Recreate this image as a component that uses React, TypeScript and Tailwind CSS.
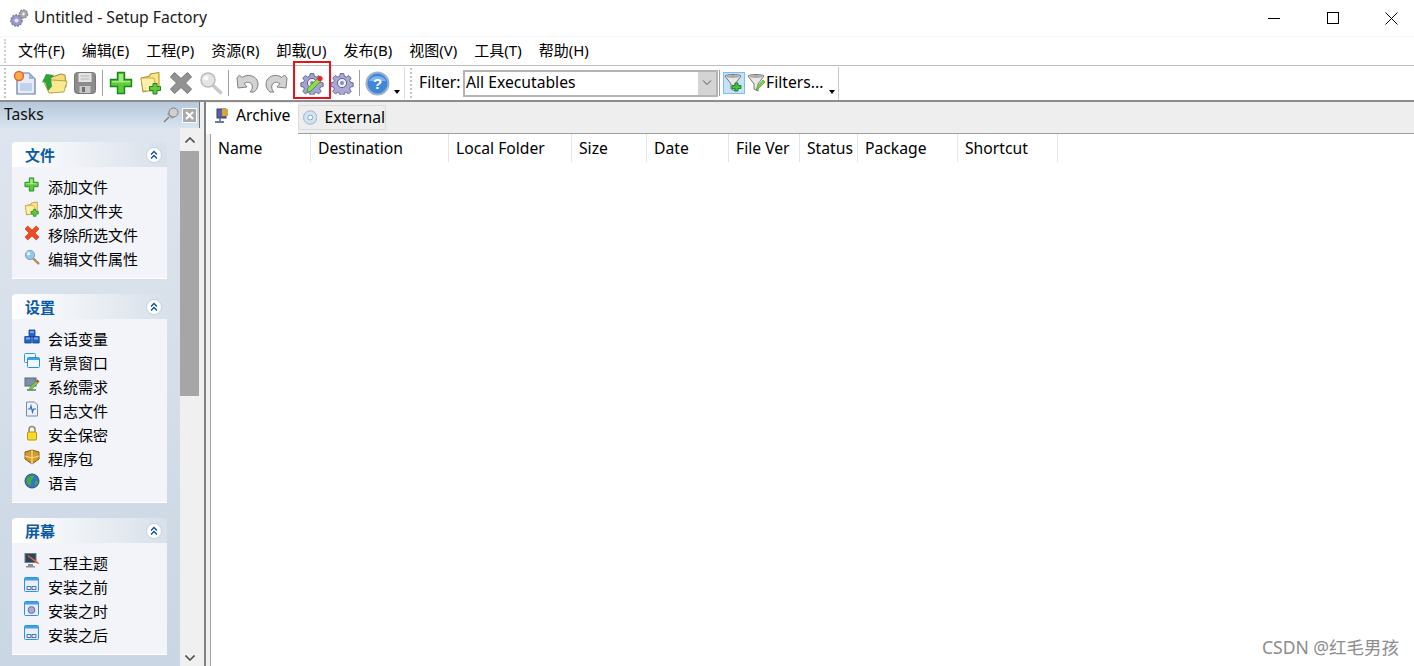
import React from "react";

type IconProps = { size?: number; muted?: boolean };

const font = "font-['Noto_Sans','Noto_Sans_CJK_SC',sans-serif]";

const menus = ["文件(F)", "编辑(E)", "工程(P)", "资源(R)", "卸载(U)", "发布(B)", "视图(V)", "工具(T)", "帮助(H)"];

const columns = [
  { name: "Name", w: "w-[100px]" },
  { name: "Destination", w: "w-[138px]" },
  { name: "Local Folder", w: "w-[123px]" },
  { name: "Size", w: "w-[75px]" },
  { name: "Date", w: "w-[82px]" },
  { name: "File Ver", w: "w-[71px]" },
  { name: "Status", w: "w-[58px]" },
  { name: "Package", w: "w-[100px]" },
  { name: "Shortcut", w: "w-[100px]" },
];

/* toolbar + task pane icons */
const Gear = ({ size = 24, muted }: IconProps) => (
  <svg width={size} height={size} viewBox="0 0 24 24">
    <path
      d="M10 1.500h4l.6 3 2.200.9 2.600-1.700 2.800 2.800-1.700 2.600.9 2.200 3 .6v4l-3 .6-.9 2.200 1.700 2.600-2.800 2.800-2.600-1.700-2.200.9-.6 3h-4l-.6-3-2.200-.9-2.600 1.700-2.800-2.800 1.700-2.600-.9-2.200-3-.6v-4l3-.6.9-2.200-1.700-2.600 2.800-2.800 2.600 1.700 2.200-.9z"
      transform="translate(1.200 1.200) scale(.9)"
      fill={muted ? "#a9a9d4" : "#a3a3d0"}
      stroke="#5f5f96"
      strokeWidth="1"
    />
    <circle cx="12" cy="12" r="4.600" fill="#eeeef8" stroke="#5f5f96" />
    <circle cx="12" cy="12" r="2" fill="#8b8bbd" />
  </svg>
);

const GearPencil = () => (
  <span className="relative block h-[24px] w-[24px]">
    <Gear />
    <svg className="absolute left-0 top-0" width="24" height="24" viewBox="0 0 24 24">
      <path d="M7 21.500l.8-4.500L17.500 7.500l3 3L11 20z" fill="#8cdc50" stroke="#3c8f22" strokeWidth=".8" />
      <circle cx="20" cy="7.500" r="2.600" fill="#e8262c" />
    </svg>
  </span>
);

const Plus = ({ size = 24 }: IconProps) => (
  <svg width={size} height={size} viewBox="0 0 24 24">
    <path d="M8.500 1.500h7v7h7v7h-7v7h-7v-7h-7v-7h7z" fill="#5fca3c" stroke="#17891a" strokeWidth="1.400" />
    <path d="M10 3h4v7H10zM3 10h18v1.500H3z" fill="#a6ea83" />
  </svg>
);

const Cross = ({ size = 24, muted }: IconProps) => (
  <svg width={size} height={size} viewBox="0 0 24 24">
    <path
      d="M5.500 1.500L12 7.500l6.500-6 4 4.500-6 6 6 6-4 4.500-6.500-6-6.500 6-4-4.500 6-6-6-6z"
      fill={muted ? "#929292" : "#ee4a24"}
      stroke={muted ? "#767676" : "#d0381a"}
    />
  </svg>
);

const Magnifier = ({ size = 24, muted }: IconProps) => (
  <svg width={size} height={size} viewBox="0 0 24 24">
    <path d="M13.500 14l8 7.500" stroke={muted ? "#c8c8c8" : "#b08d5a"} strokeWidth="3.600" strokeLinecap="round" />
    <circle cx="9" cy="9" r="7" fill={muted ? "#e4e4e4" : "#8fc8f0"} stroke={muted ? "#b9b9b9" : "#8d99a8"} strokeWidth="1.400" />
    <circle cx="7" cy="7" r="2.500" fill="#ffffff" opacity=".8" />
  </svg>
);

const FolderPlus = ({ size = 24 }: IconProps) => (
  <svg width={size} height={size} viewBox="0 0 24 24">
    <path d="M2 7l9-2V3l9-1.500V17L4 21z" fill="#ffe680" stroke="#a88f2b" strokeWidth="1" />
    <path d="M2 7h13l3 13H4z" fill="#fdf0a6" stroke="#b09a3c" strokeWidth=".8" />
    <path d="M14 12.500h4v3h3.500v4H18V23h-4v-3.500h-3.500v-4H14z" fill="#5fca3c" stroke="#17791a" strokeWidth=".9" />
  </svg>
);

const NewDoc = () => (
  <svg width="24" height="26" viewBox="0 0 24 26">
    <path d="M4 3h12l6 6v15H4z" fill="#e6edf9" stroke="#5f79a8" strokeWidth="1.200" />
    <path d="M16 3v6h6z" fill="#9fb6da" />
    <path d="M7 13h12v8H7z" fill="#c2d1ec" />
    <circle cx="6" cy="6" r="4.500" fill="#f6b33c" stroke="#ed5a45" strokeWidth="1.400" />
  </svg>
);

const OpenFolder = () => (
  <svg width="26" height="24" viewBox="0 0 26 24">
    <path d="M4 8l15-5 4 1 1 12-15 6z" fill="#f6dc78" stroke="#9d8a39" strokeWidth="1" />
    <path d="M1 9l6 13 15-1 3-11-15-1z" fill="#fbe98f" stroke="#a6903a" strokeWidth=".8" />
    <path d="M6 20L3 11l-3 .5L4 3l8 1-3 3.500 1 8z" fill="#2fa23c" />
  </svg>
);

const Save = () => (
  <svg width="24" height="24" viewBox="0 0 24 24">
    <rect x="1.500" y="1.500" width="21" height="21" rx="3" fill="#8c8c8c" stroke="#767676" />
    <rect x="5.500" y="2" width="13" height="9" fill="#e4e4e4" />
    <path d="M7.500 5h9M7.500 8h9" stroke="#b4b4b4" />
    <rect x="6.500" y="15" width="11" height="7" fill="#c9c9c9" />
    <rect x="9" y="16" width="3" height="5" fill="#6f6f6f" />
  </svg>
);

const Undo = ({ flip }: { flip?: boolean }) => (
  <svg width="24" height="22" viewBox="0 0 24 22" className={flip ? "-scale-x-100" : ""}>
    <path
      d="M2 6l1 10 9-1-3-3.500c3-2 7-1.500 8 1.500 1 2.500 0 5-2 7h4c4-3 5-8 3-12-3-5-10-6-15-2.500L4.500 3z"
      fill="#d2d2d2"
      stroke="#808080"
    />
  </svg>
);

const Help = () => (
  <svg width="25" height="25" viewBox="0 0 25 25">
    <circle cx="12.500" cy="12.500" r="11" fill="#3f87dc" stroke="#9db1cb" strokeWidth="2" />
    <path d="M4 10a9 7 0 0 1 17 0z" fill="#7fb4ee" />
    <text x="12.500" y="18" textAnchor="middle" fontSize="15" fontWeight="700" fill="#ffffff" fontFamily="Liberation Sans">?</text>
  </svg>
);

const Funnel = ({ add }: { add?: boolean }) => (
  <svg width="20" height="20" viewBox="0 0 20 20">
    <path d="M1 3c2-2 14-2 16 0l-6 8v7l-4-2v-5z" fill="#e8e8e8" stroke="#757575" />
    <ellipse cx="9" cy="3.500" rx="6.500" ry="1.500" fill="#a9a9a9" />
    {add ? (
      <path d="M11 10h3v2.500h3v3h-3V18h-3v-2.500H8v-3h3z" fill="#46c13a" stroke="#12701a" strokeWidth=".8" />
    ) : (
      <path d="M9 17l1-3 6-7 2 2-6 6z" fill="#7ed348" stroke="#3c8f22" strokeWidth=".6" />
    )}
  </svg>
);

const Blocks = () => (
  <svg width="16" height="16" viewBox="0 0 16 16">
    <path d="M5 1h6v6.500H5zM.8 7.500h6.500V14H.8zM8.700 7.500h6.500V14H8.700z" fill="#2464c8" stroke="#123f8d" strokeWidth=".8" />
    <path d="M6 2h4v2H6zM2 8.500h4v2H2zM10 8.500h4v2h-4z" fill="#78a8ee" />
  </svg>
);

const Windows = () => (
  <svg width="16" height="16" viewBox="0 0 16 16">
    <rect x=".5" y=".5" width="11" height="9" rx="1" fill="#eef6fe" stroke="#2f97ea" />
    <rect x="3.500" y="4.500" width="12" height="10" rx="1" fill="#f4f8fd" stroke="#2b8ee2" />
    <path d="M4 5h11v2H4z" fill="#3ba2ef" />
  </svg>
);

const SysReq = () => (
  <svg width="16" height="16" viewBox="0 0 16 16">
    <rect x="1" y="1" width="11" height="8" fill="#7c8fa6" stroke="#5c6670" />
    <path d="M3 12h9v2H3z" fill="#8f8f8f" />
    <path d="M5 13l1-3 6-6 2 2-6 6z" fill="#74c94a" stroke="#3c8f22" strokeWidth=".5" />
    <path d="M12 4l2 2 1.500-1.500-2-2z" fill="#dc3030" />
  </svg>
);

const LogDoc = () => (
  <svg width="16" height="16" viewBox="0 0 16 16">
    <path d="M2.500 1h8l3 3v11h-11z" fill="#eef2fa" stroke="#7b8aa8" />
    <path d="M4 8h2l1-3 1.500 6 1-3H12" fill="none" stroke="#2e6fcc" strokeWidth="1.200" />
  </svg>
);

const Lock = () => (
  <svg width="16" height="16" viewBox="0 0 16 16">
    <path d="M5 7V4.500a3 3 0 0 1 6 0V7" fill="none" stroke="#8f8a70" strokeWidth="1.600" />
    <rect x="3.500" y="7" width="9" height="8" rx="1" fill="#f8d928" stroke="#b59713" />
  </svg>
);

const Box = () => (
  <svg width="16" height="16" viewBox="0 0 16 16">
    <path d="M1 3l7-2 7 2v7l-7 5-7-5z" fill="#d49a2e" stroke="#875c12" />
    <path d="M8 1v14M1 7l7 2 7-2" stroke="#fbe18d" strokeWidth="1.200" fill="none" />
  </svg>
);

const Globe = () => (
  <svg width="16" height="16" viewBox="0 0 16 16">
    <circle cx="8" cy="8" r="7" fill="#2f78c8" stroke="#234f86" />
    <path d="M3 5c3-3 6-3 7-2 0 2-2 3-3 5 1 2 0 4-2 5-2-2-3-5-2-8zM11 8h3v3l-3 2z" fill="#49a83c" />
  </svg>
);

const Theme = () => (
  <svg width="16" height="16" viewBox="0 0 16 16">
    <rect x="1" y=".5" width="11" height="9" fill="#29435f" stroke="#6f7d88" />
    <path d="M4 11h5v2h2v1.500H2V13h2z" fill="#8b8f92" />
    <path d="M4 2l10 7 1.500 2-2.500-.5L3.500 3z" fill="#e9662f" />
  </svg>
);

const Screen = ({ gear }: { gear?: boolean }) => (
  <svg width="15" height="15" viewBox="0 0 15 15">
    <rect x=".5" y=".5" width="14" height="14" rx="1" fill="#e9eef8" stroke="#2d93e6" />
    <path d="M1 1h13v2.500H1z" fill="#3ba2ef" />
    {gear ? (
      <circle cx="7.500" cy="9" r="3.400" fill="#a9a9d6" stroke="#6e6ea6" />
    ) : (
      <path d="M3 9.500h4v3H3zM8 9.500h4v3H8z" fill="none" stroke="#3a66aa" strokeWidth=".9" />
    )}
  </svg>
);

const ToolBtn = ({ children }: { children: React.ReactNode }) => (
  <div className="flex h-[30px] w-[30px] items-center justify-center">{children}</div>
);

const Sep = () => <div className="mx-[2px] h-[26px] w-px bg-[#a0a0a0]" />;

const Grip = () => <div className="h-[30px] w-0 border-l-2 border-dotted border-[#c4c4c4]" />;

const Caret = () => <div className="mt-[18px] h-0 w-0 border-x-[3.500px] border-t-[4px] border-x-transparent border-t-black" />;

const Chevrons = () => (
  <div className="flex h-[16px] w-[16px] items-center justify-center rounded-full border border-[#c5d2e2] bg-white">
    <svg width="10" height="10" viewBox="0 0 10 10" fill="none" stroke="#0b4f96" strokeWidth="1.400">
      <path d="M2 4.500L5 1.500l3 3M2 8.500l3-3 3 3" />
    </svg>
  </div>
);

const TaskGroup = ({ title, items }: { title: string; items: { icon: React.ReactNode; label: string }[] }) => (
  <div className="w-[155px] shrink-0">
    <div className="flex h-[25px] items-center justify-between rounded-t-[4px] bg-gradient-to-r from-white to-[#d8e0ea] pl-[13px] pr-[5px]">
      <span className="mt-[2px] text-[15px] font-bold text-[#0a5aa6]">{title}</span>
      <Chevrons />
    </div>
    <div className="border-b border-white bg-[#f2f4f9] pb-[7px] pl-[12px] pt-[8px]">
      {items.map((item) => (
        <div key={item.label} className="flex h-[24px] items-center">
          <div className="-mt-[5px] flex w-[24px] justify-start">{item.icon}</div>
          <span className="text-[15px] text-black">{item.label}</span>
        </div>
      ))}
    </div>
  </div>
);

const fileItems = [
  { icon: <Plus size={15} />, label: "添加文件" },
  { icon: <FolderPlus size={16} />, label: "添加文件夹" },
  { icon: <Cross size={16} />, label: "移除所选文件" },
  { icon: <Magnifier size={16} />, label: "编辑文件属性" },
];

const settingItems = [
  { icon: <Blocks />, label: "会话变量" },
  { icon: <Windows />, label: "背景窗口" },
  { icon: <SysReq />, label: "系统需求" },
  { icon: <LogDoc />, label: "日志文件" },
  { icon: <Lock />, label: "安全保密" },
  { icon: <Box />, label: "程序包" },
  { icon: <Globe />, label: "语言" },
];

const screenItems = [
  { icon: <Theme />, label: "工程主题" },
  { icon: <Screen />, label: "安装之前" },
  { icon: <Screen gear />, label: "安装之时" },
  { icon: <Screen />, label: "安装之后" },
];

export default function App() {
  return (
    <div className={`relative flex h-[666px] w-[1414px] flex-col overflow-hidden bg-white text-[15.7px] text-black ${font}`}>
      {/* title bar */}
      <div className="flex h-[37px] shrink-0 items-center border-b border-[#f2f5fa] pl-[9px]">
        <div className="h-[20px] w-[20px]">
          <svg width="20" height="20" viewBox="0 0 20 20">
            <circle cx="7.500" cy="12.500" r="5.500" fill="#9a9ac8" stroke="#7a7aac" strokeDasharray="2 1" strokeWidth="1.600" />
            <circle cx="14.500" cy="6" r="4" fill="#a9a9a9" stroke="#8a8a8a" strokeDasharray="2 1" strokeWidth="1.400" />
            <circle cx="7.500" cy="12.500" r="2" fill="#e6e6f4" />
            <circle cx="14.500" cy="6" r="1.400" fill="#f0f0f0" />
          </svg>
        </div>
        <span className="ml-[5px] text-[#1a1a1a]">Untitled - Setup Factory</span>
        <div className="-mr-[7px] ml-auto flex items-center">
          <div className="flex w-[59px] justify-center"><div className="h-px w-[12px] bg-black" /></div>
          <div className="flex w-[59px] justify-center"><div className="h-[12px] w-[12px] border border-black" /></div>
          <div className="flex w-[59px] justify-center">
            <svg width="13" height="13" viewBox="0 0 13 13" stroke="#000000" strokeWidth="1"><path d="M.5.500l12 12M12.500.500l-12 12" /></svg>
          </div>
        </div>
      </div>

      {/* menu bar */}
      <div className="flex h-[29px] shrink-0 items-center border-b border-[#bdbdbd] pl-[4px]">
        <div className="h-[24px] w-0 border-l-2 border-dotted border-[#d0d0d0]" />
        <div className="-mt-[2px] ml-[12px] flex gap-[17px]">
          {menus.map((m) => (
            <span key={m} className="whitespace-nowrap text-[15px]">{m}</span>
          ))}
        </div>
      </div>

      {/* toolbar */}
      <div className="flex h-[36px] shrink-0 items-center border-b-2 border-[#8c8c8c] pl-[4px]">
        <Grip />
        <div className="ml-[4px] flex items-center">
          <ToolBtn><NewDoc /></ToolBtn>
          <ToolBtn><OpenFolder /></ToolBtn>
          <ToolBtn><Save /></ToolBtn>
          <Sep />
          <div className="w-[1px]" />
          <ToolBtn><Plus /></ToolBtn>
          <ToolBtn><FolderPlus /></ToolBtn>
          <ToolBtn><Cross muted /></ToolBtn>
          <ToolBtn><Magnifier muted /></ToolBtn>
          <Sep />
          <div className="w-[1px]" />
          <ToolBtn><Undo /></ToolBtn>
          <ToolBtn><Undo flip /></ToolBtn>
          <Sep />
          <ToolBtn><GearPencil /></ToolBtn>
          <ToolBtn><Gear muted /></ToolBtn>
          <Sep />
          <ToolBtn><Help /></ToolBtn>
          <div className="flex w-[10px] justify-center"><Caret /></div>
        </div>
        <div className="ml-[2px] h-[32px] w-px bg-[#dcdcdc]" />
        <div className="ml-[5px]"><Grip /></div>
        <span className="ml-[7px] w-[44px]">Filter:</span>
        <div className="flex h-[27px] w-[255px] items-center border-2 border-[#b4b4b4] pl-px">
          <span className="flex-1">All Executables</span>
          <div className="flex h-full w-[18px] items-center justify-center bg-[#d4d4d4]">
            <svg width="10" height="6" viewBox="0 0 10 6" fill="none" stroke="#555555"><path d="M1 .500l4 4 4-4" /></svg>
          </div>
        </div>
        <div className="ml-[1px] h-[26px] w-px bg-[#a0a0a0]" />
        <div className="ml-[3px] flex h-[22px] w-[22px] items-center justify-center border border-[#7cbcf0] bg-[#c4e2fa]"><Funnel add /></div>
        <div className="ml-[2px]"><Funnel /></div>
        <span className="-ml-px">Filters...</span>
        <div className="ml-[6px]"><Caret /></div>
        <div className="ml-[3px] h-[33px] w-px bg-[#c8c8c8]" />
      </div>

      <div className="flex min-h-0 flex-1">
        {/* task pane */}
        <aside className="flex w-[200px] shrink-0 flex-col bg-[#f0f0f0]">
          <div className="flex h-[26px] shrink-0 items-center border-r border-[#777777] bg-gradient-to-b from-[#b6c8db] to-[#d8e4f0] pl-[4px] pr-[2px]">
            <span className="text-[#111111]">Tasks</span>
            <div className="ml-auto flex items-center gap-[3px]">
              <svg width="16" height="16" viewBox="0 0 16 16">
                <path d="M1 15l5-5" stroke="#7f7f7f" strokeWidth="1.400" />
                <path d="M4.500 7l4.500 4.500 2.500-2.500L7 4.500z" fill="#b4b4b4" stroke="#7f7f7f" strokeWidth=".6" />
                <circle cx="10.500" cy="5.500" r="4.500" fill="#cfcfcf" stroke="#7f7f7f" />
              </svg>
              <div className="flex h-[15px] w-[15px] items-center justify-center border border-white bg-[#a9a9a9]">
                <svg width="9" height="9" viewBox="0 0 9 9" stroke="#ffffff" strokeWidth="2"><path d="M1 1l7 7M8 1l-7 7" /></svg>
              </div>
            </div>
          </div>
          <div className="flex min-h-0 flex-1">
            <div className="flex w-[180px] shrink-0 flex-col gap-[15px] bg-gradient-to-b from-[#dfe5ee] to-[#cad6e3] pl-[12px] pt-[14px]">
              <TaskGroup title="文件" items={fileItems} />
              <TaskGroup title="设置" items={settingItems} />
              <TaskGroup title="屏幕" items={screenItems} />
            </div>
            <div className="flex w-[19px] flex-col">
              <div className="flex h-[23px] items-center justify-center">
                <svg width="10" height="6" viewBox="0 0 10 6" fill="none" stroke="#505050" strokeWidth="1.600"><path d="M.5 5.500L5 1l4.500 4.500" /></svg>
              </div>
              <div className="h-[245px] bg-[#a6a6a6]" />
              <div className="mt-auto flex h-[17px] items-center justify-center">
                <svg width="10" height="6" viewBox="0 0 10 6" fill="none" stroke="#505050" strokeWidth="1.600"><path d="M.5.500L5 5l4.500-4.500" /></svg>
              </div>
            </div>
          </div>
        </aside>

        {/* splitter */}
        <div className="flex w-[10px] shrink-0 bg-[#f0f0f0]">
          <div className="ml-[4px] h-full w-[2px] bg-[#808080]" />
        </div>

        {/* file list */}
        <main className="flex min-w-0 flex-1 flex-col">
          <div className="flex h-[32px] shrink-0 items-end border-b border-[#a0a0a0] bg-[#eeeeee]">
            <div className="-mb-px -ml-[4px] flex h-[31px] w-[92px] items-center gap-[6px] bg-white pb-[6px] pl-[8px]">
              <svg width="16" height="16" viewBox="0 0 16 16">
                <rect x="3" y="1" width="9" height="9" fill="#5a5fa0" stroke="#3a3a70" />
                <path d="M8 1h6v7H8z" fill="#d9a43c" />
                <path d="M1 13h9v2H1z" fill="#6f76b0" />
                <path d="M5 10h2v3H5z" fill="#888888" />
              </svg>
              <span>Archive</span>
            </div>
            <div className="mb-[3px] flex h-[25px] w-[88px] items-center gap-[7px] border border-[#dcdcdc] pl-[4px]">
              <svg width="15" height="15" viewBox="0 0 15 15">
                <circle cx="7.500" cy="7.500" r="7" fill="#cfe4f5" stroke="#9ab3c9" />
                <circle cx="7.500" cy="7.500" r="2.500" fill="#ffffff" stroke="#8a9eb0" />
              </svg>
              <span>External</span>
            </div>
          </div>
          <div className="flex min-h-0 flex-1 flex-col border-l border-[#a0a0a0]">
            <div className="flex h-[28px] shrink-0 items-stretch">
              {columns.map((c) => (
                <div key={c.name} className={`flex items-center border-r border-[#e5e5e5] pl-[7px] pt-[2px] ${c.w}`}>
                  {c.name}
                </div>
              ))}
            </div>
          </div>
        </main>
      </div>

      {/* highlight drawn on the screenshot */}
      <div className="absolute left-[293px] top-[61px] h-[38px] w-[38px] border-2 border-[#e5141c]" />
      <div className="absolute bottom-[6px] right-[15px] text-[17.500px] text-[#8c8c8c]">CSDN @红毛男孩</div>
    </div>
  );
}
